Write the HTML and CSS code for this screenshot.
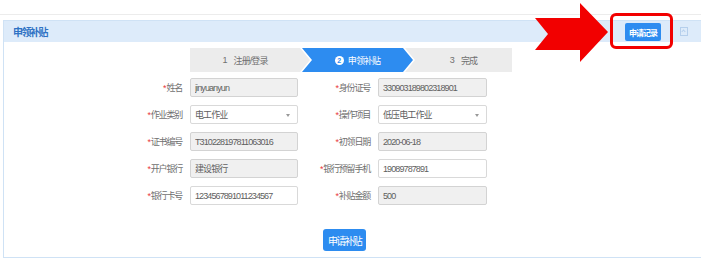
FILE: index.html
```html
<!DOCTYPE html>
<html lang="zh-CN">
<head>
  <meta charset="UTF-8">
  <meta name="viewport" content="width=device-width, initial-scale=1.0">
  <title>申领补贴</title>
  <link rel="stylesheet" href="styles.css">
</head>
<body>
  <div class="topbar"></div>

  <div class="panel">
    <div class="panel-head">
      <span class="panel-title">申领补贴</span>
      <div class="head-tools">
        <button class="btn-record">申请记录</button>
        <span class="collapse"></span>
      </div>
    </div>

    <div class="panel-body">
      <div class="steps">
        <div class="step step-first"><span class="num">1</span>注册/登录</div>
        <div class="step step-active"><span class="num-circle">2</span>申领补贴</div>
        <div class="step step-last"><span class="num">3</span>完成</div>
      </div>

      <div class="form">
        <label class="label"><i>*</i>姓名</label>
        <input class="field readonly" value="jinyuanyun" readonly>
        <label class="label"><i>*</i>身份证号</label>
        <input class="field readonly" value="330903189802318901" readonly>

        <label class="label"><i>*</i>作业类别</label>
        <div class="field select">电工作业<span class="caret"></span></div>
        <label class="label"><i>*</i>操作项目</label>
        <div class="field select">低压电工作业<span class="caret"></span></div>

        <label class="label"><i>*</i>证书编号</label>
        <input class="field readonly" value="T310228197811063016" readonly>
        <label class="label"><i>*</i>初领日期</label>
        <input class="field readonly" value="2020-06-18" readonly>

        <label class="label"><i>*</i>开户银行</label>
        <input class="field readonly" value="建设银行" readonly>
        <label class="label"><i>*</i>银行预留手机</label>
        <input class="field" value="19089787891">

        <label class="label"><i>*</i>银行卡号</label>
        <input class="field" value="1234567891011234567">
        <label class="label"><i>*</i>补贴金额</label>
        <input class="field readonly" value="500" readonly>
      </div>

      <div class="actions">
        <button class="btn-submit">申请补贴</button>
      </div>
    </div>
  </div>

  <!-- Markierung -->
  <svg class="mark-arrow" width="75" height="64" viewBox="0 0 75 64">
    <polygon points="0,18 45,18 45,3 73,32 45,62 45,50 0,50 13,34" fill="#f20000"/>
  </svg>
  <div class="mark-box"></div>
</body>
</html>
```

FILE: styles.css
```css
body, html {
  margin: 0;
  padding: 0;
  height: 100%;
  overflow: hidden;
  background-color: #ffffff;
  font-family: "Liberation Sans", "Noto Sans CJK SC", sans-serif;
}

.topbar {
  height: 14px;
  border-bottom: 1px solid #ececec;
}

.panel {
  margin: 5px 0 0 3px;
  border: 1px solid #cfe2f5;
  border-right: none;
}

.panel-head {
  height: 21px;
  display: flex;
  align-items: center;
  justify-content: space-between;
  padding: 0 13px 0 9px;
  background-color: #ddebfa;
}

.panel-title {
  color: #2e72c4;
  font-size: 10px;
  font-weight: bold;
  letter-spacing: -1.5px;
}

.head-tools {
  display: flex;
  align-items: center;
  gap: 19px;
}

.btn-record {
  width: 36px;
  height: 18px;
  padding: 0;
  margin-top: 1px;
  border: none;
  border-radius: 2px;
  background-color: #2d8cf0;
  color: #ffffff;
  font-family: inherit;
  font-size: 8px;
  font-weight: bold;
  letter-spacing: -1px;
}

.collapse {
  position: relative;
  width: 6px;
  height: 7px;
  border: 1px solid #b5cfec;
}

.collapse::after {
  content: "";
  position: absolute;
  left: 1px;
  top: 2px;
  width: 2px;
  height: 2px;
  border-top: 1px solid #b5cfec;
  border-left: 1px solid #b5cfec;
  transform: rotate(45deg);
}

.panel-body {
  padding: 6px 0 6px;
}

/* Schritte */
.steps {
  display: flex;
  margin-left: 186px;
  height: 24px;
}

.step {
  display: flex;
  align-items: center;
  justify-content: center;
  height: 24px;
  background-color: #ececec;
  color: #707070;
  font-size: 9px;
  letter-spacing: -0.9px;
  box-sizing: border-box;
}

.step-first {
  width: 120px;
  padding-right: 10px;
  clip-path: polygon(0 0, 110px 0, 120px 50%, 110px 100%, 0 100%);
}

.step-active {
  width: 111px;
  margin-left: -8px;
  padding: 0 10px;
  background-color: #2d8cf0;
  color: #ffffff;
  clip-path: polygon(0 0, 101px 0, 111px 50%, 101px 100%, 0 100%, 10px 50%);
}

.step-last {
  width: 107px;
  margin-left: -8px;
  padding-left: 10px;
  clip-path: polygon(0 0, 100% 0, 100% 100%, 0 100%, 10px 50%);
}

.num {
  margin-right: 7px;
}

.num-circle {
  width: 9px;
  height: 9px;
  margin-right: 4px;
  border-radius: 50%;
  background-color: #ffffff;
  color: #2d8cf0;
  font-size: 7px;
  font-weight: bold;
  line-height: 9px;
  text-align: center;
  letter-spacing: 0;
}

/* Formular */
.form {
  display: grid;
  grid-template-columns: 80px 108px 80px 109px;
  grid-auto-rows: 19px;
  row-gap: 8px;
  margin: 6px 0 0 106px;
}

.label {
  display: flex;
  align-items: center;
  justify-content: flex-end;
  padding-right: 8px;
  color: #707070;
  font-size: 9px;
  letter-spacing: -1.2px;
}

.label i {
  color: #e8383d;
  font-style: normal;
  margin-right: 1px;
}

.field {
  position: relative;
  display: flex;
  align-items: center;
  width: 100%;
  height: 19px;
  margin: 0;
  padding: 0 4px;
  box-sizing: border-box;
  border: 1px solid #d9d9d9;
  border-radius: 2px;
  background-color: #ffffff;
  color: #606060;
  font-family: inherit;
  font-size: 9px;
  letter-spacing: -0.9px;
  outline: none;
}

.field.readonly {
  background-color: #f0f0f0;
  border-color: #d3d3d3;
}

.caret {
  position: absolute;
  right: 7px;
  top: 8px;
  border-left: 2px solid transparent;
  border-right: 2px solid transparent;
  border-top: 3px solid #999999;
}

.actions {
  margin-top: 24px;
  padding-left: 319px;
}

.btn-submit {
  width: 43px;
  height: 22px;
  padding: 0;
  border: none;
  border-radius: 3px;
  background-color: #2d8cf0;
  color: #ffffff;
  font-family: inherit;
  font-size: 10px;
  letter-spacing: -1.8px;
}

/* rote Markierung */
.mark-arrow {
  position: absolute;
  left: 535px;
  top: 0;
}

.mark-box {
  position: absolute;
  left: 610px;
  top: 13px;
  width: 63px;
  height: 36px;
  box-sizing: border-box;
  border: 3px solid #f20000;
  border-radius: 6px;
}
```
